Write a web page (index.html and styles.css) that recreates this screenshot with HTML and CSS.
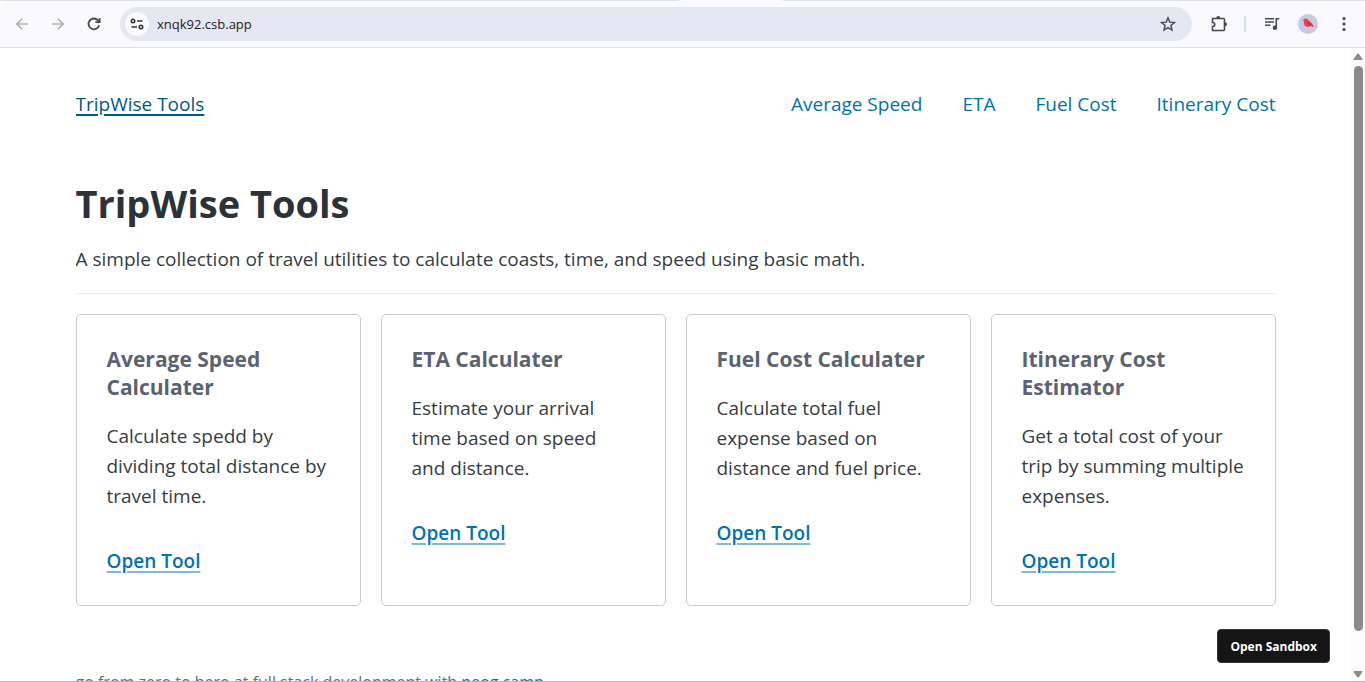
FILE: index.html
```html
<!DOCTYPE html>
<html lang="en">
<head>
<meta charset="utf-8">
<title>TripWise Tools</title>
<link rel="stylesheet" href="styles.css">
</head>
<body>
<div class="browser">
  <div class="tabstrip"><span class="active-tab"></span></div>
  <div class="toolbar">
    <button class="tool muted" aria-label="Back"><svg width="16" height="16" viewBox="0 0 16 16"><path d="M14 8H3M8 2.700 2.700 8 8 13.300"/></svg></button>
    <button class="tool muted" aria-label="Forward"><svg width="16" height="16" viewBox="0 0 16 16"><path d="M2 8h11M8 2.700 13.300 8 8 13.300"/></svg></button>
    <button class="tool reload" aria-label="Reload"><svg width="16" height="16" viewBox="0 0 16 16"><path d="M13.200 9.200A5.400 5.400 0 1 1 12 4.300l1.400 1.500"/><path d="M13.600 2v4.200H9.400"/></svg></button>
    <div class="omnibox">
      <button class="site-info" aria-label="View site information"><svg width="14" height="14" viewBox="0 0 14 14"><circle cx="3" cy="4" r="1.700"/><path d="M7 4h5.500M1.500 10H7"/><circle cx="11" cy="10" r="1.700"/></svg></button>
      <input class="address" type="text" value="xnqk92.csb.app" aria-label="Address">
      <button class="star" aria-label="Bookmark this page"><svg width="16" height="16" viewBox="0 0 16 16"><path d="m8 1.800 1.800 4.300 4.700.4-3.600 3 1.100 4.600L8 11.600l-4 2.500 1.100-4.600-3.600-3 4.700-.4z"/></svg></button>
    </div>
    <button class="tool puzzle" aria-label="Extensions"><svg width="18" height="18" viewBox="0 0 18 18"><path d="M2.500 3.500h11q1 0 1 1v10q0 1-1 1h-11v-4q2.300-.1 2.300-2t-2.300-2z"/><path class="solid" d="M6.300 3a2 2 0 0 1 4 0zM15 7.300a2 2 0 0 1 0 4z"/></svg></button>
    <span class="divider"></span>
    <button class="tool media" aria-label="Media controls"><svg width="16" height="16" viewBox="0 0 16 16"><path d="M1 2.800h9M1 6h9M1 9.200h5.500M12.300 12V2.800h3"/><circle class="solid" cx="10.900" cy="11.800" r="2.200"/></svg></button>
    <button class="avatar" aria-label="Profile"><svg width="20" height="20" viewBox="0 0 20 20"><path fill="#ef4047" d="m4.500 6.800 2-2q2.400-.8 4.300 1.700 2.900 2.200 5 5.500l-1 1-2.200-1q-3.800 2-6-.5Q5.200 9.500 6 7z"/><path fill="#cf2a3c" d="M9 7.500q3.500 1.500 4.500 4.200-3 .3-4.500-4.200"/></svg></button>
    <button class="tool menu" aria-label="Menu"><svg width="16" height="16" viewBox="0 0 16 16"><g class="solid"><circle cx="8" cy="2.500" r="1.600"/><circle cx="8" cy="8" r="1.600"/><circle cx="8" cy="13.500" r="1.600"/></g></svg></button>
  </div>
  <div class="viewport">
    <div class="page">
      <header class="site-header">
        <a class="brand" href="#">TripWise Tools</a>
        <nav class="site-nav">
          <a href="#speed">Average Speed</a>
          <a href="#eta">ETA</a>
          <a href="#fuel">Fuel Cost</a>
          <a href="#itinerary">Itinerary Cost</a>
        </nav>
      </header>
      <main>
        <h1>TripWise Tools</h1>
        <p class="lead">A simple collection of travel utilities to calculate coasts, time, and speed using basic math.</p>
        <hr>
        <div class="cards">
          <article class="card" id="speed">
            <h2>Average Speed Calculater</h2>
            <p>Calculate spedd by dividing total distance by travel time.</p>
            <a href="#speed">Open Tool</a>
          </article>
          <article class="card" id="eta">
            <h2>ETA Calculater</h2>
            <p>Estimate your arrival time based on speed and distance.</p>
            <a href="#eta">Open Tool</a>
          </article>
          <article class="card" id="fuel">
            <h2>Fuel Cost Calculater</h2>
            <p>Calculate total fuel expense based on distance and fuel price.</p>
            <a href="#fuel">Open Tool</a>
          </article>
          <article class="card" id="itinerary">
            <h2>Itinerary Cost Estimator</h2>
            <p>Get a total cost of your trip by summing multiple expenses.</p>
            <a href="#itinerary">Open Tool</a>
          </article>
        </div>
      </main>
      <footer class="site-footer">go from zero to hero at full stack development with <a href="#camp">neog.camp</a></footer>
    </div>
    <div class="scrollbar">
      <svg width="10" height="8" viewBox="0 0 10 8"><path d="M4.300.7q.7-.8 1.400 0L9.500 6q.5 1-.5 1H1Q0 7 .5 6z"/></svg>
      <span class="thumb"></span>
      <svg width="10" height="8" viewBox="0 0 10 8"><path d="M4.300 7.300q.7.800 1.400 0L9.500 2q.5-1-.5-1H1Q0 1 .5 2z"/></svg>
    </div>
    <button class="sandbox">Open Sandbox</button>
  </div>
</div>
</body>
</html>
```

FILE: styles.css
```css
* { box-sizing: border-box; }

body {
  margin: 0;
  background: #fff;
  color: #373c44;
  font-family: "Segoe UI", "Open Sans", "Noto Sans", sans-serif;
  font-size: 19px;
  line-height: 30px;
}

button {
  padding: 0;
  border: 0;
  background: none;
  font-family: inherit;
}

.browser {
  display: flex;
  flex-direction: column;
  height: 100vh;
  overflow: hidden;
  border-bottom: 1px solid #b4b8be;
}

/* Browser chrome */
.tabstrip {
  display: flex;
  flex: none;
  justify-content: center;
  height: 1px;
  padding-left: 96px;
  background: #dde1f0;
}

.active-tab { width: 104px; background: #faf9ff; }

.toolbar {
  display: flex;
  flex: none;
  align-items: center;
  height: 47px;
  padding: 0 13px 0 14px;
  border-bottom: 1px solid #dfdfe8;
  border-radius: 8px 8px 0 0;
  background: #faf9ff;
}

.toolbar svg {
  display: block;
  fill: none;
  stroke: #434957;
  stroke-width: 1.6;
}

.toolbar .solid { fill: #434957; stroke: none; }

.tool { flex: none; width: 16px; margin-right: 20px; }
.toolbar .muted svg { stroke: #afafb6; }
.toolbar .reload svg { stroke-width: 1.8; }
.toolbar .star svg { stroke-width: 1.4; }

.omnibox {
  display: flex;
  flex: 1;
  align-items: center;
  height: 34px;
  margin: 0 18px 0 -2px;
  padding: 0 16px 0 5px;
  border-radius: 17px;
  background: #e5e8f3;
}

.site-info {
  display: grid;
  place-items: center;
  width: 24px;
  height: 24px;
  border-radius: 50%;
  background: #faf9ff;
}

.toolbar .site-info svg { stroke: #303442; }

.address {
  flex: 1;
  min-width: 0;
  padding: 0;
  margin-left: 8px;
  border: 0;
  background: none;
  color: #202126;
  font: 13px/20px "Segoe UI", "Open Sans", "Noto Sans", sans-serif;
}

.puzzle { width: 18px; margin-right: 16px; }
.divider { width: 2px; height: 16px; margin-right: 18px; background: #d5e2fb; }
.media { margin-right: 18px; }

.avatar {
  flex: none;
  width: 20px;
  height: 20px;
  margin-right: 18px;
  border-radius: 50%;
  background: #c6cae7;
}

.toolbar .avatar svg { stroke: none; }
.menu { margin-right: 0; }

/* Page */
.viewport {
  position: relative;
  display: flex;
  flex: 1;
  min-height: 0;
}

.page {
  flex: 1;
  min-width: 0;
  max-width: 1200px;
  margin: 0 auto;
  overflow: hidden;
}

a { color: #0172ad; text-decoration: none; }

.site-header {
  display: flex;
  justify-content: space-between;
  padding-top: 41px;
}

.brand {
  color: #015887;
  text-decoration: underline;
  text-decoration-thickness: 2px;
  text-underline-offset: 3px;
}

.site-nav { display: flex; gap: 40px; }

h1 {
  margin: 59px 0 16px;
  color: #2d3138;
  font-size: 38px;
  line-height: 50px;
}

.lead { margin: 0; }

hr {
  height: 1px;
  margin: 19px 0 20px;
  border: 0;
  background: #e7eaf0;
}

.cards {
  display: grid;
  grid-template-columns: repeat(4, 1fr);
  gap: 20px;
}

.card {
  padding: 30px 30px 29px;
  border: 1px solid #ccc;
  border-radius: 5px;
}

.card h2 {
  margin: 0 0 20px;
  color: #5c6370;
  font-size: 21px;
  line-height: 28px;
}

.card p { margin: 0 0 35px; }

.card a {
  font-weight: 600;
  text-decoration: underline;
  text-decoration-color: #80b8d6;
  text-decoration-thickness: 2px;
  text-underline-offset: 3px;
}

.site-footer {
  padding-top: 61px;
  color: #646b79;
  font-size: 16px;
}

.scrollbar {
  display: flex;
  flex: none;
  flex-direction: column;
  align-items: center;
  gap: 5px;
  width: 14px;
  padding: 5px 0 3px;
  background: #fcfcfc;
  fill: #8b8b8b;
}

.scrollbar svg { flex: none; }

.thumb {
  width: 9px;
  height: 90.4%;
  margin-bottom: auto;
  border-radius: 5px;
  background: #8b8b8b;
}

.sandbox {
  position: absolute;
  right: 35px;
  bottom: 18px;
  padding: 8px 12px 6px;
  border: 1px solid #343434;
  border-radius: 4px;
  background: #151515;
  color: #fff;
  font-size: 12px;
  font-weight: 700;
  line-height: 18px;
}
```
